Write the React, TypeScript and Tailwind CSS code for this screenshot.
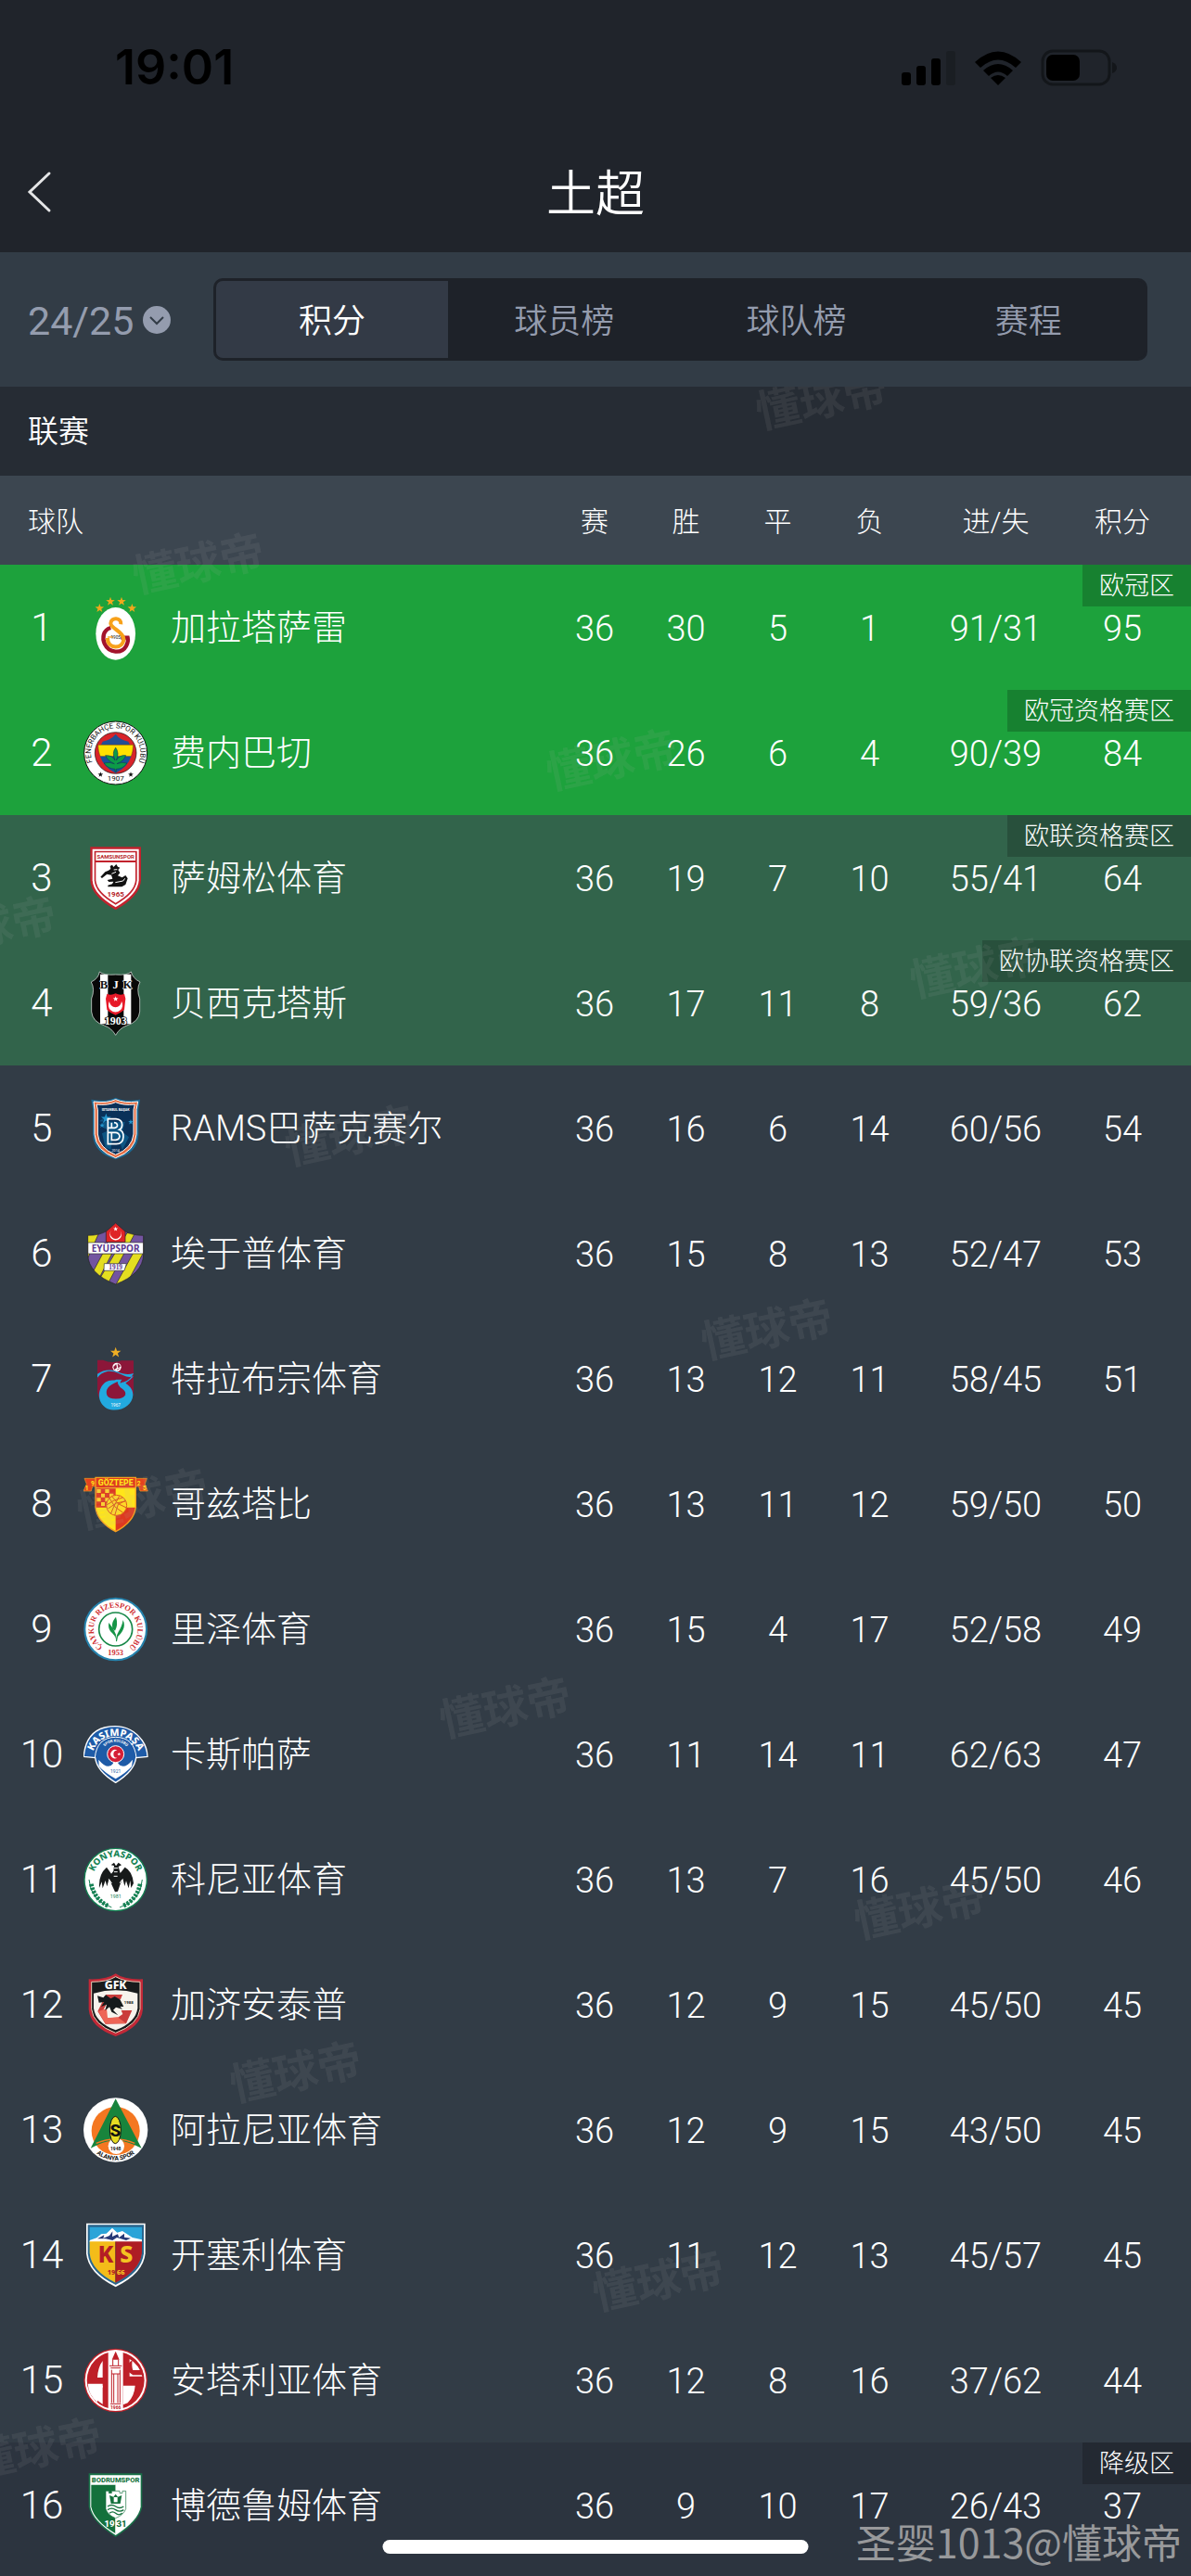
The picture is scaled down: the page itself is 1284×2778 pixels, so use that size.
import React from "react";

const starPoints = (cx: number, cy: number, r: number) =>
  Array.from({ length: 10 }, (_, i) => {
    const a = (Math.PI / 5) * i - Math.PI / 2;
    const q = i % 2 ? r * 0.4 : r;
    return `${(cx + q * Math.cos(a)).toFixed(1)},${(cy + q * Math.sin(a)).toFixed(1)}`;
  }).join(" ");

function Star({ x, y, r, fill }: { x: number; y: number; r: number; fill: string }) {
  return <polygon points={starPoints(x, y, r)} fill={fill} />;
}

function ArcText({ id, d, size, fill, children }: { id: string; d: string; size: number; fill: string; children: string }) {
  return (
    <>
      <path id={id} d={d} fill="none" />
      <text fontSize={size} fill={fill} textAnchor="middle">
        <textPath href={`#${id}`} startOffset="50%">
          {children}
        </textPath>
      </text>
    </>
  );
}

function Label({ x = 104, y, size, fill, children }: { x?: number; y: number; size: number; fill: string; children: string }) {
  return (
    <text x={x} y={y} fontSize={size} fill={fill} textAnchor="middle">
      {children}
    </text>
  );
}

const crests: Record<string, React.ReactNode> = {
  galatasaray: (
    <>
      <Star x={52} y={42} r={15} fill="#f0a81c" />
      <Star x={87} y={20} r={15} fill="#f0a81c" />
      <Star x={123} y={20} r={15} fill="#f0a81c" />
      <Star x={157} y={42} r={15} fill="#f0a81c" />
      <ellipse cx="104" cy="124" rx="64" ry="85" fill="#fff" />
      <path d="M88 105 C64 112 59 138 69 158 C82 187 124 190 138 164 Q146 149 143 137 H121" fill="none" stroke="#a3122c" strokeWidth="13" />
      <path d="M121 94 C124 71 88 69 88 91 C89 108 128 116 130 141 C130 175 76 176 78 138" fill="none" stroke="#f7a11a" strokeWidth="12" />
      <path d="M78 135 H96" stroke="#f7a11a" strokeWidth="4" />
      <Label y={142} size={14} fill="#111">1905</Label>
    </>
  ),
  fenerbahce: (
    <>
      <circle cx="104" cy="105" r="102" fill="#fff" stroke="#111" strokeWidth="3" />
      <circle cx="104" cy="105" r="67" fill="#d8232a" stroke="#111" strokeWidth="2" />
      <path d="M104 44 Q117 62 145 68 L150 79 H57 L62 68 Q90 62 104 44Z" fill="#234f94" />
      <path d="M47 79 H161 Q160 102 154 116 H54 Q48 102 47 79Z" fill="#ffe100" stroke="#111" />
      <path d="M54 116 H154 Q143 151 104 170 Q65 151 54 116Z" fill="#17519b" />
      <path d="M104 88 Q117 105 106 129 Q116 111 137 113 Q132 130 108 140 Q124 133 141 138 Q128 157 106 157 V166 H102 V157 Q79 156 66 138 Q85 133 100 140 Q77 130 71 113 Q94 112 102 129 Q91 104 104 88Z" fill="#0c9b48" stroke="#123b54" strokeWidth="2" />
      <ArcText id="fener-ring" d="M50 164 A80 80 0 1 1 158 164" size={24} fill="#111">FENERBAHÇE SPOR KULÜBÜ</ArcText>
      <Label y={196} size={24} fill="#111">1907</Label>
      <Star x={55} y={175} r={9} fill="#111" />
      <Star x={153} y={175} r={9} fill="#111" />
    </>
  ),
  samsunspor: (
    <>
      <path d="M22 4 H186 V112 Q184 163 104 208 Q24 163 22 112Z" fill="#c2222d" />
      <path d="M29 11 H179 V112 Q176 158 104 199 Q32 158 29 112Z" fill="#fff" />
      <path d="M35 17 H173 V112 Q170 154 104 191 Q38 154 35 112Z" fill="#c2222d" />
      <path d="M40 22 H168 V48 H40Z M40 54 H168 V112 Q165 150 104 185 Q43 150 40 112Z" fill="#fff" />
      <text x="104" y="42" fontSize="18" fill="#b61f2b" textAnchor="middle" fontWeight="700">SAMSUNSPOR</text>
      <path d="M81 80 L88 75 L86 66 L93 62 L97 69 L106 60 L111 68 L118 71 L112 78 L118 88 L111 97 L125 103 L136 96 L143 106 L136 126 L124 133 H79 V128 L93 124 L97 116 L82 117 L77 111 L94 107 L90 95 L76 92 L60 105 L55 101 L70 85Z" fill="#111" />
      <path d="M103 119 L128 114 L134 106 M91 91 L105 85 M98 78 L109 77" stroke="#fff" strokeWidth="3" fill="none" />
      <text x="104" y="166" fontSize="24" fill="#b61f2b" textAnchor="middle" fontWeight="700">1965</text>
    </>
  ),
  besiktas: (
    <>
      <clipPath id="bjk-shield">
        <path d="M52 3 Q65 15 104 12 Q142 15 154 3 Q159 24 183 36 Q170 59 182 90 V132 Q179 165 140 177 Q117 185 104 208 Q91 185 68 177 Q29 165 26 132 V90 Q38 59 25 36 Q49 24 52 3Z" />
      </clipPath>
      <g clipPath="url(#bjk-shield)">
        <rect width="210" height="210" fill="#080808" />
        <path d="M54 11 H79 V172 H54Z M130 11 H154 V172 H130Z" fill="#fff" />
      </g>
      <path d="M52 3 Q65 15 104 12 Q142 15 154 3 Q159 24 183 36 Q170 59 182 90 V132 Q179 165 140 177 Q117 185 104 208 Q91 185 68 177 Q29 165 26 132 V90 Q38 59 25 36 Q49 24 52 3Z" fill="none" stroke="#eee" strokeWidth="2" />
      <g fontFamily="Liberation Serif" fontWeight="700" fontSize="38" textAnchor="middle">
        <text x="66" y="57" fill="#111" stroke="#fff" strokeWidth="3" paintOrder="stroke">B</text>
        <text x="104" y="57" fill="#fff">J</text>
        <text x="142" y="57" fill="#111" stroke="#fff" strokeWidth="3" paintOrder="stroke">K</text>
      </g>
      <path d="M76 74 Q89 81 104 73 Q119 81 132 74 L136 90 L132 126 Q120 136 104 143 Q86 137 76 126 L72 90Z" fill="#e71928" />
      <path d="M84 98 A23 23 0 1 0 123 98 A18 18 0 1 1 84 98Z" fill="#fff" />
      <Star x={104} y={91} r={9} fill="#fff" />
      <text x="104" y="173" fontSize="36" fontFamily="Liberation Serif" fontWeight="700" fill="#fff" stroke="#111" strokeWidth="5" paintOrder="stroke" textAnchor="middle">1903</text>
    </>
  ),
  basaksehir: (
    <>
      <path d="M25 11 Q75 20 104 5 Q134 20 183 11 L178 42 V126 Q175 185 104 205 Q34 185 30 126 V42Z" fill="#1c6993" />
      <path d="M33 18 Q77 24 104 11 Q132 24 176 18 L171 43 V124 Q168 177 104 200 Q40 177 36 124 V43Z" fill="#e36e44" stroke="#fff" strokeWidth="3" />
      <path d="M42 27 Q79 31 104 20 Q130 31 166 27 L162 44 V123 Q158 168 104 190 Q50 168 46 123 V44Z" fill="#0a3159" stroke="#fff" strokeWidth="3" />
      <path d="M51 82 L67 70 L58 99 L82 111 L60 121 L71 166 L88 174 L94 134 L117 148 L126 174 L147 133 L126 116 L134 84Z" fill="#127bb0" opacity=".5" />
      <Star x={73} y={73} r={17} fill="#2495cd" />
      <Star x={60} y={95} r={9} fill="#2495cd" />
      <Star x={153} y={84} r={9} fill="#2495cd" />
      <path d="M79 74 H105 Q125 76 125 93 Q125 105 116 109 Q130 114 129 132 Q128 155 106 155 H79Z M91 86 V103 H78 M91 103 H101 Q112 100 109 92 Q107 86 99 86 M91 118 V142 H105 Q116 140 117 130 Q115 118 103 118 H78" fill="none" stroke="#fff" strokeWidth="5" />
      <text x="104" y="47" fontSize="11" fontWeight="700" fill="#fff" textAnchor="middle">ISTANBUL BAŞAK</text>
      <Label y={180} size={11} fill="#fff">2014</Label>
    </>
  ),
  eyupspor: (
    <>
      <clipPath id="eyup-shield">
        <path d="M14 46 Q53 46 76 31 L104 6 L132 31 Q154 46 194 46 V108 Q192 170 104 204 Q16 170 14 108Z" />
      </clipPath>
      <g clipPath="url(#eyup-shield)">
        <rect width="210" height="210" fill="#7354a0" />
        <path d="M15 35 L49 40 L11 126 L-8 88Z M141 38 H167 L73 213 L50 190Z M174 79 L199 92 L145 192 L102 210Z M62 105 H92 L50 185 L30 165Z" fill="#e4dd20" stroke="#222" strokeWidth="2" />
        <path d="M73 30 L104 4 L135 30 V68 H73Z" fill="#df2427" stroke="#222" strokeWidth="2" />
      </g>
      <path d="M90 30 A19 19 0 1 0 118 30 A17 17 0 1 1 90 30Z" fill="#fff" />
      <Star x={104} y={25} r={8} fill="#fff" />
      <path d="M14 69 H194 V105 H14Z M67 137 H139 L132 160 H66Z" fill="#fff" stroke="#333" strokeWidth="2" />
      <text x="104" y="98" fontSize="30" fontFamily="Noto Sans" fontWeight="700" fill="#5d3990" textAnchor="middle">EYÜPSPOR</text>
      <text x="104" y="157" fontSize="22" fontFamily="Liberation Serif" fontWeight="700" fill="#5d3990" textAnchor="middle">1919</text>
      <path d="M14 46 Q53 46 76 31 L104 6 L132 31 Q154 46 194 46 V108 Q192 170 104 204 Q16 170 14 108Z" fill="none" stroke="#222" strokeWidth="2" />
    </>
  ),
  trabzonspor: (
    <>
      <Star x={104} y={20} r={18} fill="#efae24" />
      <path d="M45 44 H63 Q92 57 123 46 H162 V149 Q157 182 126 194 H82 Q48 180 45 147Z" fill="#8c1639" />
      <circle cx="108" cy="67" r="14" fill="#fff" />
      <path d="M98 66 L105 59 L107 69 L100 74Z M111 56 L119 63 L113 69Z M108 76 L117 71" fill="#8c1639" stroke="#8c1639" strokeWidth="2" />
      <path d="M45 89 C63 76 87 72 110 82 C128 90 146 93 162 87 C154 104 139 115 124 116 C113 122 122 130 133 137 Q145 146 140 159 C134 179 76 181 74 151 C72 134 81 126 104 111 C83 106 66 115 56 134 C43 161 54 188 76 201 C116 216 158 192 160 158 C161 136 145 125 136 119 C142 113 154 108 161 96 C143 105 126 91 113 87 C88 76 64 78 45 101Z" fill="#22a9df" />
      <path d="M107 111 Q62 129 72 158 C81 180 132 177 139 158 Q143 145 129 135 Q110 122 117 111Z" fill="#8c1639" stroke="#22a9df" strokeWidth="8" />
      <Label y={196} size={14} fill="#fff">1967</Label>
    </>
  ),
  goztepe: (
    <>
      <path d="M41 22 H3 L10 40 L0 63 H25 L29 48 H41Z M167 22 H205 L199 40 L208 63 H183 L179 48 H167Z" fill="#e6431d" stroke="#f0a020" strokeWidth="2" />
      <clipPath id="goz-shield">
        <path d="M39 19 H169 V115 Q164 162 104 194 Q44 162 39 115Z" />
      </clipPath>
      <g clipPath="url(#goz-shield)">
        <rect width="210" height="210" fill="#ffe51a" />
        <path d="M39 19 H169 V53 H39Z M104 116 H169 V194 H104Z M39 53 H104 V116 H39Z" fill="#de3920" />
        <path d="M43 57 H56 V69 H43Z M70 57 H83 V69 H70Z M57 71 H69 V83 H57Z M84 71 H97 V83 H84Z M43 85 H56 V97 H43Z M70 85 H83 V97 H70Z M57 99 H69 V111 H57Z" fill="#ffd32a" />
      </g>
      <path d="M39 19 H169 V115 Q164 162 104 194 Q44 162 39 115Z M39 53 H169" fill="none" stroke="#f59e20" strokeWidth="4" />
      <text x="104" y="46" fontSize="26" fontWeight="800" fill="#ffe51a" textAnchor="middle">GÖZTEPE</text>
      <circle cx="107" cy="109" r="33" fill="#ffd927" stroke="#d95b20" strokeWidth="3" />
      <path d="M75 108 L99 93 L127 84 M79 120 L106 102 L135 96 M92 80 L112 104 L139 117 M84 86 L102 114 L128 133 M88 137 L99 111 L116 79 M101 142 L112 106 L136 94" fill="none" stroke="#d95b20" strokeWidth="3" />
      <text x="5" y="60" fontSize="20" fontWeight="700" fill="#ffe51a">1</text>
      <text x="24" y="46" fontSize="20" fontWeight="700" fill="#ffe51a">9</text>
      <text x="173" y="46" fontSize="20" fontWeight="700" fill="#ffe51a">2</text>
      <text x="192" y="60" fontSize="20" fontWeight="700" fill="#ffe51a">5</text>
    </>
  ),
  rizespor: (
    <>
      <circle cx="104" cy="105" r="100" fill="#fff" stroke="#2583ae" strokeWidth="6" />
      <circle cx="104" cy="105" r="54" fill="none" stroke="#168747" strokeWidth="5" />
      <path d="M105 144 C104 116 122 110 128 75 C139 99 123 118 111 129 L108 145Z M104 138 C105 117 76 117 82 84 Q99 103 105 122Z M99 107 C88 95 93 78 105 65 Q113 90 102 110Z" fill="#169447" />
      <g fontFamily="Liberation Serif" fontWeight="700">
        <ArcText id="rize-ring" d="M57 159 A71 71 0 1 1 151 159" size={25} fill="#cf2e32">ÇAYKUR RİZESPOR KULÜBÜ</ArcText>
        <Label y={189} size={25} fill="#cf2e32">1953</Label>
      </g>
    </>
  ),
  kasimpasa: (
    <>
      <path d="M1 108 Q9 34 68 18 Q146 0 190 60 Q206 83 207 112 L170 116 Q165 159 104 196 Q43 159 38 116 L1 112Z" fill="#1e5ba7" stroke="#fff" strokeWidth="4" />
      <path d="M37 116 Q43 50 104 49 Q165 50 171 116" fill="none" stroke="#fff" strokeWidth="3" />
      <g fontFamily="Noto Sans" fontWeight="800">
        <ArcText id="kasim-name" d="M28 115 A76 70 0 0 1 180 115" size={32} fill="#fff">KASIMPAŞA</ArcText>
      </g>
      <g fontWeight="700">
        <ArcText id="kasim-club" d="M55 113 A49 49 0 0 1 153 113" size={12} fill="#fff">SPOR KULÜBÜ</ArcText>
      </g>
      <path d="M49 122 Q79 158 96 134 V119 H112 V134 Q130 158 159 122 L156 144 Q137 165 104 184 Q68 163 50 143Z" fill="#fff" />
      <Label y={166} size={15} fill="#1e5ba7">1921</Label>
      <circle cx="104" cy="104" r="27" fill="#d51f36" stroke="#fff" strokeWidth="3" />
      <path d="M109 92 A14 14 0 1 0 109 116 A12 12 0 1 1 109 92Z" fill="#fff" />
      <Star x={115} y={104} r={6} fill="#fff" />
    </>
  ),
  konyaspor: (
    <>
      <circle cx="104" cy="105" r="101" fill="#fff" stroke="#138052" strokeWidth="4" />
      <g fontFamily="Noto Sans" fontWeight="800">
        <ArcText id="konya-name" d="M30 105 A74 74 0 0 1 178 105" size={29} fill="#168456">KONYASPOR</ArcText>
      </g>
      <path d="M99 60 L89 58 L99 50 L105 61 L113 50 L123 58 L113 63 L119 84 L134 65 Q158 77 162 117 L154 132 L151 108 L146 133 L138 109 L133 126 L127 101 L118 122 L111 143 L102 145 L92 123 L83 101 L76 127 L71 108 L62 133 L59 112 L51 132 Q48 88 75 65 L90 86 L97 77Z" fill="#171a1a" />
      <path d="M82 104 L91 116 L81 126 M126 104 L118 115 L129 126 M99 68 H112 M99 80 H110 M98 94 H110" stroke="#fff" strokeWidth="3" fill="none" />
      <path d="M18 105 Q22 171 91 195 M190 105 Q187 171 117 195" fill="none" stroke="#138052" strokeWidth="3" />
      <path d="M25 119 Q36 170 80 190 M183 119 Q173 170 128 190" fill="none" stroke="#138052" strokeWidth="14" strokeDasharray="8 4" />
      <Label y={165} size={16} fill="#138052">1981</Label>
    </>
  ),
  gaziantep: (
    <>
      <path d="M17 22 Q76 24 104 4 Q131 24 192 22 V120 Q187 178 104 207 Q22 178 17 120Z" fill="#c32837" />
      <path d="M26 31 Q78 31 104 14 Q132 31 183 31 V119 Q177 169 104 196 Q31 169 26 119Z" fill="#171b1c" stroke="#ead0b9" strokeWidth="3" />
      <path d="M33 68 Q104 48 175 68 V116 Q169 162 104 187 Q38 162 33 116Z" fill="#f7f3ec" />
      <text x="104" y="55" fontSize="37" fontFamily="Noto Sans" fontWeight="800" fill="#fff" textAnchor="middle">GFK</text>
      <path d="M73 72 H126 L120 87 L82 88 L64 122 L78 148 L111 146 L127 135 L122 123 H157 L138 166 L71 167 L46 126Z" fill="#ca3c3b" />
      <path d="M48 126 L75 117 L78 148 L71 166Z M78 148 L110 145 L138 165 L71 166Z" fill="#ee6556" />
      <path d="M45 76 L64 82 L72 73 L88 85 L101 78 L118 88 L130 111 L118 111 L126 119 L105 113 L96 122 L112 139 L91 128 L84 112 L70 124 L75 104 L57 111 L67 96 L50 98Z" fill="#151a1c" />
      <text x="146" y="102" fontSize="13" fontWeight="700" fill="#222" textAnchor="middle">1988</text>
    </>
  ),
  alanyaspor: (
    <>
      <circle cx="104" cy="105" r="104" fill="#fff" />
      <circle cx="104" cy="108" r="78" fill="#f47721" />
      <path d="M104 4 L188 164 Q146 141 104 137 Q61 142 23 164Z" fill="#18843c" />
      <path d="M41 148 Q104 122 166 148" stroke="#f47721" strokeWidth="4" fill="none" />
      <circle cx="106" cy="157" r="26" fill="#fff" />
      <ellipse cx="103" cy="105" rx="18" ry="44" fill="#e7dc22" stroke="#111" strokeWidth="3" />
      <text x="103" y="125" fontSize="57" fontWeight="800" fill="#111" textAnchor="middle">S</text>
      <text x="104" y="170" fontSize="15" fontWeight="700" fill="#111" textAnchor="middle">1948</text>
      <g fontWeight="700">
        <ArcText id="alanya-name" d="M28 167 A98 98 0 0 0 180 167" size={20} fill="#111">ALANYA SPOR</ArcText>
      </g>
    </>
  ),
  kayserispor: (
    <>
      <path d="M9 2 H200 V100 Q194 164 104 208 Q15 164 9 100Z" fill="#fff" />
      <path d="M14 7 H195 V100 Q188 161 104 201 Q20 161 14 100Z" fill="#29658d" />
      <path d="M20 14 H189 V99 Q182 155 104 194 Q27 155 20 99Z" fill="#2aa4d8" />
      <path d="M20 57 L43 49 L57 37 L74 35 L93 17 L109 32 L126 27 L158 48 L189 55 V63 H20Z" fill="#fff" />
      <path d="M45 52 L67 40 L64 50 L84 42 L94 28 L93 45 L111 37 L115 48 L132 35 L132 47 L153 50 L138 57 L108 48 L94 57 L72 52Z" fill="#273976" />
      <path d="M20 61 H104 V194 Q26 156 20 99Z" fill="#f4bc19" />
      <path d="M104 61 H189 V99 Q182 155 104 194Z" fill="#ae1d24" />
      <path d="M104 61 V194" stroke="#701719" strokeWidth="2" />
      <g fontFamily="Noto Sans" fontWeight="800" textAnchor="middle">
        <text x="72" y="129" fontSize="75" fill="#b41d25">K</text>
        <text x="139" y="129" fontSize="75" fill="#f4c322">S</text>
        <text x="90" y="169" fontSize="22" fill="#b41d25">19</text>
        <text x="121" y="169" fontSize="22" fill="#f4c322">66</text>
      </g>
    </>
  ),
  antalyaspor: (
    <>
      <circle cx="104" cy="105" r="103" fill="#be2028" />
      <circle cx="104" cy="105" r="99" fill="#fff" />
      <circle cx="104" cy="105" r="93" fill="#be2028" />
      <path d="M22 135 V91 Q32 48 59 36 Q46 58 45 91 V104 H22 Z" fill="#be2028" />
      <path d="M45 96 Q47 62 62 42 V96Z M14 116 H62 V128 H45 V176 Q16 152 14 116Z" fill="#fff" />
      <path d="M62 122 H45 V170 L62 182Z" fill="#fff" />
      <path d="M80 13 Q104 6 128 13 V198 Q104 204 80 198Z" fill="#fff" />
      <path d="M92 38 L104 11 L116 38Z" fill="#be2028" />
      <path d="M95 38 V57 M113 38 V57 M84 58 H124 M88 65 H120 M91 71 V178 M98 84 V178 M111 84 V178 M118 71 V178 M90 84 H119 M87 181 H121" fill="none" stroke="#be2028" strokeWidth="3" />
      <path d="M149 36 Q180 54 190 92 H149Z M128 122 H167 Q165 155 143 178 L128 184Z" fill="#fff" />
      <path d="M146 78 V50 Q151 44 158 40 Q155 60 160 72 L190 72 L194 88 H160Z" fill="#be2028" />
      <text x="104" y="199" fontSize="15" fontWeight="700" fill="#be2028" textAnchor="middle">1966</text>
    </>
  ),
  bodrumspor: (
    <>
      <path d="M17 1 H190 V109 Q183 157 104 207 Q25 157 17 109Z" fill="#187047" />
      <path d="M22 7 H185 V109 Q178 154 104 201 Q29 154 22 109Z" fill="#fff" />
      <path d="M25 38 H104 V196 Q34 154 25 109Z" fill="#14713c" />
      <path d="M104 38 H182 V109 Q174 154 104 196Z" fill="#fff" />
      <text x="104" y="31" fontSize="23" fontWeight="800" fill="#14713c" textAnchor="middle">BODRUMSPOR</text>
      <path d="M72 58 H82 V65 H91 V58 H117 V65 H126 V58 H137 V116 Q129 136 104 146 Q79 136 72 116Z" fill="#fff" stroke="#14713c" strokeWidth="2" />
      <path d="M84 72 L97 77 L104 68 L111 77 L124 72 L119 99 H89Z" fill="#14713c" />
      <path d="M78 108 Q91 99 104 108 T130 108 M78 119 Q91 110 104 119 T130 119 M84 130 Q94 121 104 130 T125 130" fill="none" stroke="#14713c" strokeWidth="4" />
      <path d="M98 78 V94 H110 V78" fill="#fff" />
      <g fontWeight="800" fontSize="29" textAnchor="middle">
        <text x="84" y="174" fill="#fff">19</text>
        <text x="123" y="174" fill="#14713c">31</text>
      </g>
      <path d="M104 146 V196" stroke="#fff" strokeWidth="2" />
    </>
  ),
};

type Team = {
  name: string;
  crest: string;
  stats: [number, number, number, number, string, number];
  tone?: string;
  zone?: string;
};

const teams: Team[] = [
  { name: "加拉塔萨雷", crest: "galatasaray", stats: [36, 30, 5, 1, "91/31", 95], tone: "bg-[#1da23c]", zone: "欧冠区" },
  { name: "费内巴切", crest: "fenerbahce", stats: [36, 26, 6, 4, "90/39", 84], tone: "bg-[#1da23c]", zone: "欧冠资格赛区" },
  { name: "萨姆松体育", crest: "samsunspor", stats: [36, 19, 7, 10, "55/41", 64], tone: "bg-[#32644b]", zone: "欧联资格赛区" },
  { name: "贝西克塔斯", crest: "besiktas", stats: [36, 17, 11, 8, "59/36", 62], tone: "bg-[#32644b]", zone: "欧协联资格赛区" },
  { name: "RAMS巴萨克赛尔", crest: "basaksehir", stats: [36, 16, 6, 14, "60/56", 54] },
  { name: "埃于普体育", crest: "eyupspor", stats: [36, 15, 8, 13, "52/47", 53] },
  { name: "特拉布宗体育", crest: "trabzonspor", stats: [36, 13, 12, 11, "58/45", 51] },
  { name: "哥兹塔比", crest: "goztepe", stats: [36, 13, 11, 12, "59/50", 50] },
  { name: "里泽体育", crest: "rizespor", stats: [36, 15, 4, 17, "52/58", 49] },
  { name: "卡斯帕萨", crest: "kasimpasa", stats: [36, 11, 14, 11, "62/63", 47] },
  { name: "科尼亚体育", crest: "konyaspor", stats: [36, 13, 7, 16, "45/50", 46] },
  { name: "加济安泰普", crest: "gaziantep", stats: [36, 12, 9, 15, "45/50", 45] },
  { name: "阿拉尼亚体育", crest: "alanyaspor", stats: [36, 12, 9, 15, "43/50", 45] },
  { name: "开塞利体育", crest: "kayserispor", stats: [36, 11, 12, 13, "45/57", 45] },
  { name: "安塔利亚体育", crest: "antalyaspor", stats: [36, 12, 8, 16, "37/62", 44] },
  { name: "博德鲁姆体育", crest: "bodrumspor", stats: [36, 9, 10, 17, "26/43", 37], tone: "bg-[#2c343f]", zone: "降级区" },
];

const marks = [
  "left-[814px] -top-[17px]",
  "left-[142px] top-[160px]",
  "left-[588px] top-[372px]",
  "-left-[82px] top-[552px]",
  "left-[980px] top-[596px]",
  "left-[306px] top-[777px]",
  "left-[755px] top-[986px]",
  "left-[82px] top-[1169px]",
  "left-[473px] top-[1394px]",
  "left-[920px] top-[1611px]",
  "left-[247px] top-[1787px]",
  "left-[638px] top-[2012px]",
  "-left-[33px] top-[2193px]",
];

const tabs = ["积分", "球员榜", "球队榜", "赛程"];
const columns = ["赛", "胜", "平", "负", "进/失"];

function StatusBar() {
  return (
    <div className="flex h-[144px] items-center justify-between pt-[2px] pl-[124px] pr-[80px] text-black">
      <span className="font-[Inter] text-[52px] leading-[60px] font-semibold">19:01</span>
      <div className="flex items-center gap-5">
        <svg className="h-[38px] w-[58px]" viewBox="0 0 58 38" aria-label="信号">
          <rect x="0" y="24" width="10" height="14" rx="3" />
          <rect x="16" y="17" width="10" height="21" rx="3" />
          <rect x="32" y="9" width="10" height="29" rx="3" />
          <rect x="48" y="1" width="10" height="37" rx="3" fill="#1a1e23" />
        </svg>
        <svg className="h-[37px] w-[52px]" viewBox="0 0 52 37" aria-label="无线网络">
          <path d="M1 12 Q26 -11 51 12 L45 18 Q26 1 7 18Z M10 21 Q26 7 42 21 L36 27 Q26 18 16 27Z M18 29 Q26 23 34 29 L26 37Z" />
        </svg>
        <svg className="h-[40px] w-[82px]" viewBox="0 0 82 40" aria-label="电池">
          <rect x="2" y="2" width="72" height="36" rx="11" fill="none" stroke="#13161a" strokeWidth="3" />
          <rect x="6" y="6" width="36" height="28" rx="7" />
          <path d="M77 14 Q82 16 82 20 Q82 24 77 26Z" fill="#13161a" />
        </svg>
      </div>
    </div>
  );
}

export default function App() {
  return (
    <div className="relative min-h-screen overflow-hidden bg-[#2c343f] font-['Roboto','Noto_Sans_CJK_SC',sans-serif] font-light text-white">
      <header className="bg-[#20242b]">
        <StatusBar />
        <div className="grid h-[128px] grid-cols-[1fr_auto_1fr] items-center px-7">
          <button type="button" aria-label="返回" className="w-7">
            <svg className="h-[48px] w-[28px]" viewBox="0 0 28 48" fill="none" stroke="#e4e5e6" strokeWidth="3" strokeLinecap="round">
              <path d="M25 3 L4 23 L25 43" />
            </svg>
          </button>
          <h1 className="pt-1 text-[53px] leading-[64px] font-[350]">土超</h1>
        </div>
      </header>

      <nav className="flex h-[145px] items-center bg-[#323c46] pr-[47px] pl-[30px]">
        <button type="button" className="flex w-[200px] items-center gap-[10px] pt-[2px] text-[43px] leading-[48px] font-normal text-[#949cae]">
          24/25
          <svg className="size-[31px]" viewBox="0 0 31 31">
            <circle cx="15" cy="15" r="15" fill="#949cae" />
            <path d="M8 12 L15 19 L22 12" fill="none" stroke="#323c46" strokeWidth="2" />
          </svg>
        </button>
        <div className="flex h-[89px] flex-1 overflow-hidden rounded-[10px] border-3 border-[#1e2229] bg-[#1e2229]">
          {tabs.map((tab, i) => (
            <button
              key={tab}
              type="button"
              className={
                i === 0
                  ? "flex-1 bg-[#333a46] pt-1 text-[36px] leading-[48px] font-[350] text-white"
                  : "flex-1 pt-1 text-[36px] leading-[48px] font-[350] text-[#949cae]"
              }
            >
              {tab}
            </button>
          ))}
        </div>
      </nav>

      <main className="relative overflow-hidden">
        <h2 className="flex h-24 items-center bg-[#262c34] px-[30px] pt-[2px] text-[33px] leading-[48px] font-[350]">联赛</h2>
        <table className="w-full table-fixed border-collapse bg-[#323c46] text-center">
          <colgroup>
            <col className="w-[90px]" />
            <col className="w-[70px]" />
            <col />
            <col className="w-[98px]" />
            <col className="w-[99px]" />
            <col className="w-[99px]" />
            <col className="w-[99px]" />
            <col className="w-[173px]" />
            <col className="w-[124px]" />
          </colgroup>
          <thead>
            <tr className="h-24 bg-[#3c4650] text-[30px] leading-[48px]">
              <th scope="col" colSpan={3} className="pt-[3px] pl-[30px] text-left font-light">球队</th>
              {columns.map((c) => (
                <th key={c} scope="col" className="pt-[3px] font-light">{c}</th>
              ))}
              <th scope="col" className="pt-[3px] pr-6 font-light">积分</th>
            </tr>
          </thead>
          <tbody>
            {teams.map((team, i) => (
              <tr key={team.name} className={`h-[135px] text-[38px] leading-[48px] ${team.tone ?? "bg-[#323c46]"}`}>
                <td className="text-[42px]">{i + 1}</td>
                <td>
                  <svg className="size-[70px] font-['Roboto',sans-serif] font-normal" viewBox="0 0 210 210" role="img" aria-label={team.name}>
                    {crests[team.crest]}
                  </svg>
                </td>
                <td className="pl-6 text-left whitespace-nowrap">{team.name}</td>
                {team.stats.slice(0, 5).map((s, j) => (
                  <td key={j} className="pt-[2px]">{s}</td>
                ))}
                <td className="relative pt-[2px] pr-6">
                  {team.stats[5]}
                  {team.zone && (
                    <span className="absolute top-0 right-0 h-[45px] bg-black/20 px-[18px] pt-[2px] text-[27px] leading-[43px] whitespace-nowrap">{team.zone}</span>
                  )}
                </td>
              </tr>
            ))}
          </tbody>
        </table>
        <div aria-hidden="true" className="pointer-events-none absolute inset-0 text-[48px] leading-[64px] font-bold text-[#b4b4b4]/10">
          {marks.map((m) => (
            <span key={m} className={`absolute -rotate-12 whitespace-nowrap ${m}`}>懂球帝</span>
          ))}
        </div>
      </main>

      <div className="absolute bottom-6 left-1/2 h-[15px] w-[459px] -translate-x-1/2 rounded-full bg-white" />
      <span className="absolute right-[10px] bottom-[6px] font-['Noto_Sans_CJK_SC',sans-serif] text-[43px] leading-[64px] font-normal whitespace-nowrap text-[#98999b]">圣婴1013@懂球帝</span>
    </div>
  );
}
